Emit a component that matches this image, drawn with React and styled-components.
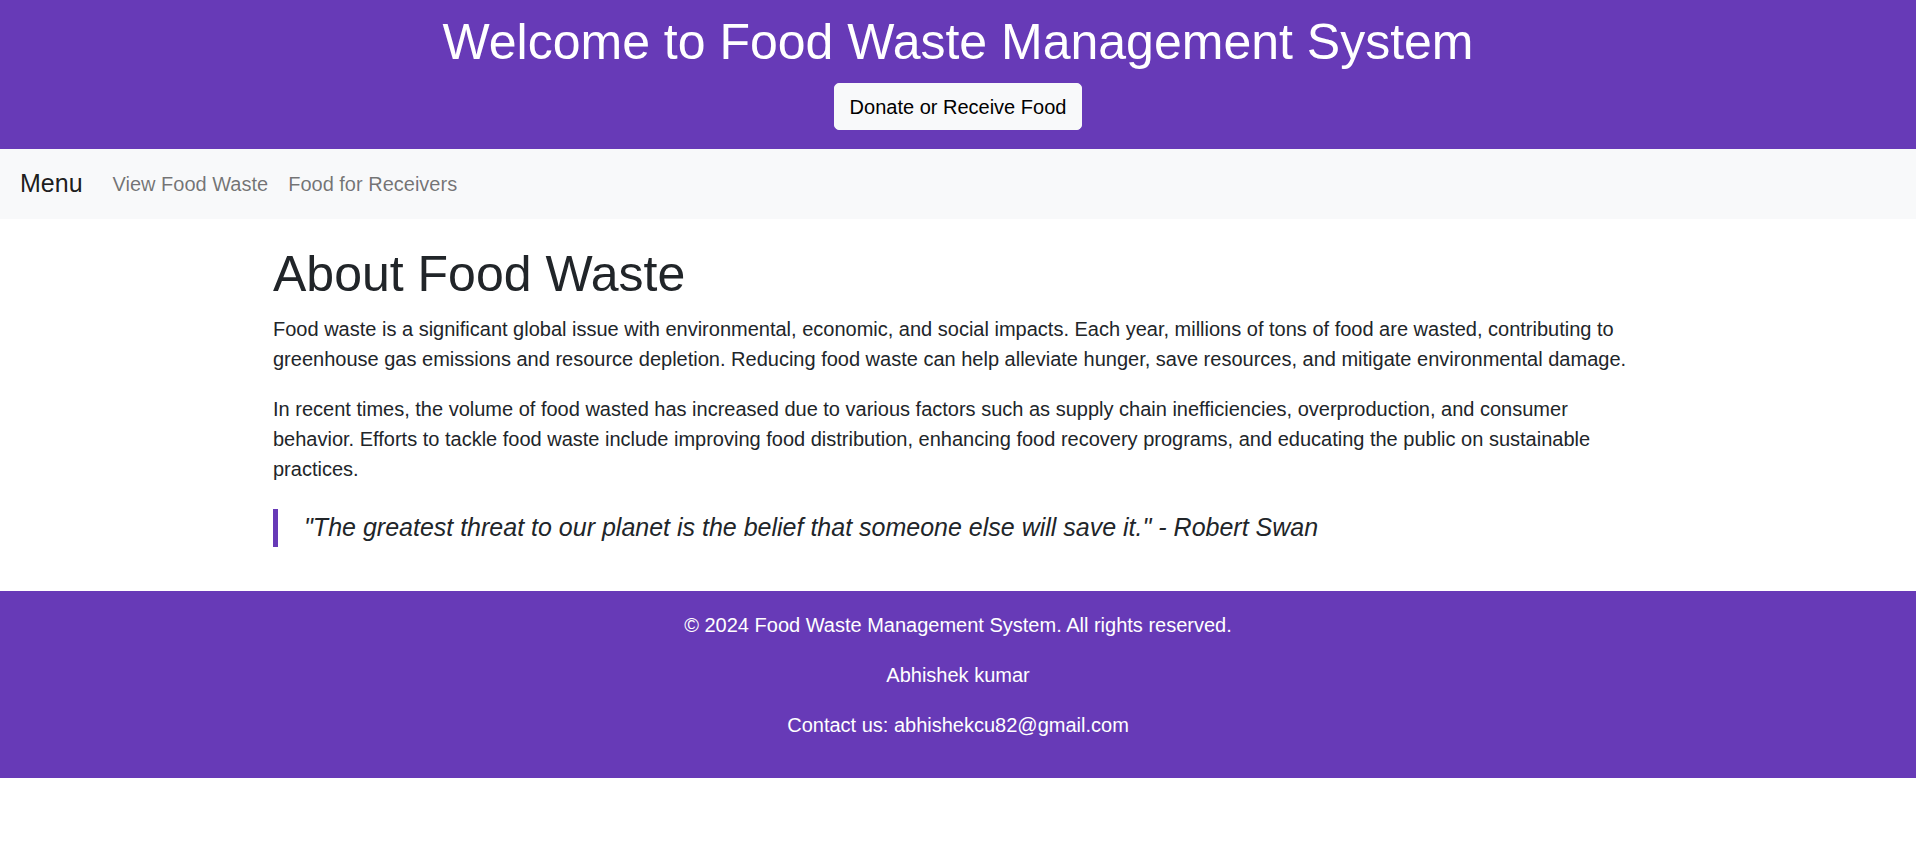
import React from "react";
import styled, { createGlobalStyle } from "styled-components";

const GlobalStyle = createGlobalStyle`
  *, *::before, *::after { box-sizing: border-box; }
  body {
    margin: 0;
    font-family: "Liberation Sans", Arial, sans-serif;
    font-size: 20px;
    line-height: 1.5;
    color: #212529;
    background: #fff;
  }
`;

const PURPLE = "#673ab7";

const Header = styled.header`
  background: ${PURPLE};
  color: #fff;
  text-align: center;
  padding: 12px 0 19px;
`;

const Title = styled.h1`
  margin: 0 0 11px;
  font-size: 50px;
  font-weight: 400;
  line-height: 1.2;
`;

const LightButton = styled.button`
  font-family: inherit;
  font-size: 20px;
  line-height: 1.5;
  color: #000;
  background: #f8f9fa;
  border: 1.25px solid #f8f9fa;
  border-radius: 5px;
  padding: 7.5px 15px;
  cursor: pointer;
`;

const NavBar = styled.nav`
  display: flex;
  align-items: center;
  background: #f8f9fa;
  padding: 10px 20px;
`;

const Brand = styled.a`
  font-size: 25px;
  line-height: 1.5;
  padding: 3.9px 0;
  margin-right: 20px;
  color: rgba(0, 0, 0, 0.9);
  text-decoration: none;
`;

const NavList = styled.ul`
  display: flex;
  list-style: none;
  margin: 0;
  padding: 0;
`;

const NavLink = styled.a`
  display: block;
  padding: 10px;
  font-size: 20px;
  line-height: 1.5;
  color: rgba(0, 0, 0, 0.55);
  text-decoration: none;
`;

const Main = styled.main`
  max-width: 1370px;
  margin: 0 auto;
  padding: 25px 0 24px;
`;

const Heading = styled.h1`
  margin: 0 0 10px;
  font-size: 50px;
  font-weight: 400;
  line-height: 1.2;
`;

const Paragraph = styled.p`
  margin: 0 0 20px;
`;

const Quote = styled.blockquote`
  margin: 25px 0 20px;
  border-left: 5px solid ${PURPLE};
  padding-left: 26px;
  font-size: 25px;
  line-height: 1.5;
  font-style: italic;
`;

const Footer = styled.footer`
  background: ${PURPLE};
  color: #fff;
  text-align: center;
  padding: 19px 0 18px;
`;

const FooterLine = styled.p`
  margin: 0 0 20px;
`;

export default function App() {
  return (
    <>
      <GlobalStyle />
      <Header>
        <Title>Welcome to Food Waste Management System</Title>
        <LightButton>Donate or Receive Food</LightButton>
      </Header>
      <NavBar>
        <Brand href="#">Menu</Brand>
        <NavList>
          <li><NavLink href="#">View Food Waste</NavLink></li>
          <li><NavLink href="#">Food for Receivers</NavLink></li>
        </NavList>
      </NavBar>
      <Main>
        <Heading>About Food Waste</Heading>
        <Paragraph>
          Food waste is a significant global issue with environmental, economic, and social impacts. Each year, millions of tons of food are wasted, contributing to greenhouse gas emissions and resource depletion. Reducing food waste can help alleviate hunger, save resources, and mitigate environmental damage.
        </Paragraph>
        <Paragraph>
          In recent times, the volume of food wasted has increased due to various factors such as supply chain inefficiencies, overproduction, and consumer behavior. Efforts to tackle food waste include improving food distribution, enhancing food recovery programs, and educating the public on sustainable practices.
        </Paragraph>
        <Quote>"The greatest threat to our planet is the belief that someone else will save it." - Robert Swan</Quote>
      </Main>
      <Footer>
        <FooterLine>© 2024 Food Waste Management System. All rights reserved.</FooterLine>
        <FooterLine>Abhishek kumar</FooterLine>
        <FooterLine>Contact us: abhishekcu82@gmail.com</FooterLine>
      </Footer>
    </>
  );
}
